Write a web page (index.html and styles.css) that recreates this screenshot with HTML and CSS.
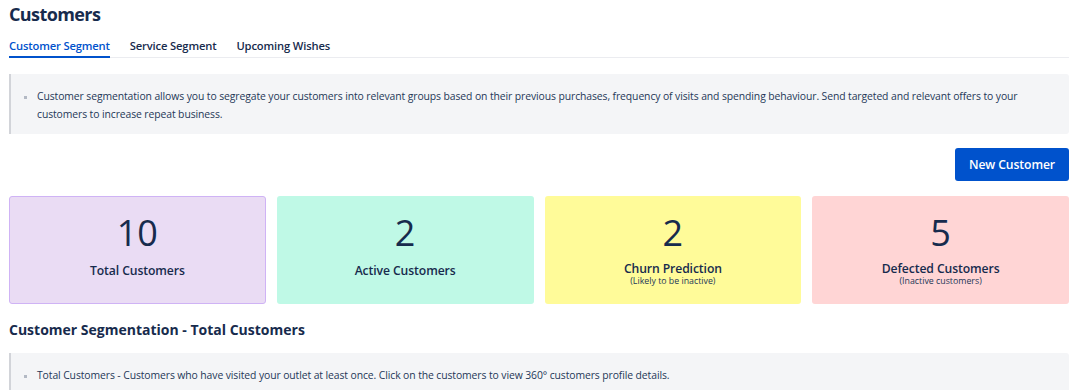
FILE: index.html
```html
<!DOCTYPE html>
<html lang="en">
<head>
  <meta charset="UTF-8" />
  <meta name="viewport" content="width=device-width, initial-scale=1.0"/>
  <title>Customers</title>
  <link rel="stylesheet" href="styles.css">
</head>
<body>
  <div class="page">
    <h1 class="title">Customers</h1>

    <nav class="tabs">
      <a class="tab active">Customer Segment</a>
      <a class="tab">Service Segment</a>
      <a class="tab">Upcoming Wishes</a>
    </nav>

    <div class="note">
      <ul>
        <li>Customer segmentation allows you to segregate your customers into relevant groups based on their previous purchases, frequency of visits and spending behaviour. Send targeted and relevant offers to your customers to increase repeat business.</li>
      </ul>
    </div>

    <div class="actions">
      <button class="btn-primary">New Customer</button>
    </div>

    <div class="cards">
      <div class="card total">
        <div class="count">10</div>
        <div class="label">Total Customers</div>
      </div>
      <div class="card active-c">
        <div class="count">2</div>
        <div class="label">Active Customers</div>
      </div>
      <div class="card churn">
        <div class="count">2</div>
        <div class="label">Churn Prediction</div>
        <div class="sub">(Likely to be inactive)</div>
      </div>
      <div class="card defected">
        <div class="count">5</div>
        <div class="label">Defected Customers</div>
        <div class="sub">(Inactive customers)</div>
      </div>
    </div>

    <h2 class="section-title">Customer Segmentation - Total Customers</h2>

    <div class="note">
      <ul>
        <li>Total Customers - Customers who have visited your outlet at least once. Click on the customers to view 360° customers profile details.</li>
      </ul>
    </div>
  </div>
</body>
</html>
```

FILE: styles.css
```css
* { box-sizing: border-box; }
body {
  margin: 0;
  font-family: 'Open Sans', 'Noto Sans', sans-serif;
  color: #172b4d;
  background: #fff;
}
.page {
  padding: 0 11px 0 9px;
}
.title {
  margin: 0;
  padding-top: 2px;
  font-size: 18px;
  font-weight: 700;
  line-height: 24px;
  letter-spacing: -0.6px;
}
.tabs {
  display: flex;
  gap: 20px;
  margin-top: 12px;
  border-bottom: 1px solid #ebecf0;
}
.tab {
  font-size: 11.2px;
  font-weight: 600;
  line-height: 16px;
  padding-bottom: 2px;
  border-bottom: 2px solid transparent;
  margin-bottom: -1px;
  color: #172b4d;
  letter-spacing: -0.15px;
}
.tab.active {
  color: #0052cc;
  border-bottom-color: #0052cc;
}
.note {
  margin-top: 16px;
  background: #f4f5f7;
  border-left: 2px solid #d2d4d9;
  border-radius: 0 3px 3px 0;
  padding: 13px 12px 11px 12px;
}
.note ul {
  margin: 0;
  padding-left: 14px;
  list-style: square;
}
.note li {
  font-size: 10.4px;
  line-height: 18px;
  color: #253858;
  letter-spacing: -0.1px;
}
.note li::marker { color: #b3b9c4; font-size: 9px; }
.actions {
  display: flex;
  justify-content: flex-end;
  margin-top: 14px;
}
.btn-primary {
  font-family: inherit;
  font-size: 12.2px;
  font-weight: 600;
  color: #fff;
  background: #0052cc;
  border: none;
  border-radius: 3px;
  width: 114px;
  height: 33px;
  padding: 0;
  letter-spacing: -0.1px;
}
.cards {
  display: grid;
  grid-template-columns: repeat(4, 1fr);
  gap: 11px;
  margin-top: 15px;
}
.card {
  height: 108px;
  border-radius: 3px;
  border: 1px solid transparent;
  display: flex;
  flex-direction: column;
  align-items: center;
  padding-top: 14px;
  color: #172b4d;
}
.card.total { background: #eadcf4; border-color: #cfb3f5; }
.card.active-c { background: #bff9e6; }
.card.churn { background: #fffb99; }
.card.defected { background: #ffd5d5; }
.count {
  font-size: 36px;
  line-height: 44px;
  font-weight: 400;
}
.label {
  margin-top: 8px;
  font-size: 12.2px;
  font-weight: 600;
  line-height: 16px;
  letter-spacing: -0.1px;
}
.churn .label, .defected .label { margin-top: 6px; }
.sub {
  font-size: 8.8px;
  line-height: 9px;
  color: #253858;
}
.section-title {
  margin: 16px 0 0;
  font-size: 14px;
  font-weight: 700;
  line-height: 20px;
}
.section-title + .note {
  margin-top: 13px;
  padding-bottom: 12px;
}
```
